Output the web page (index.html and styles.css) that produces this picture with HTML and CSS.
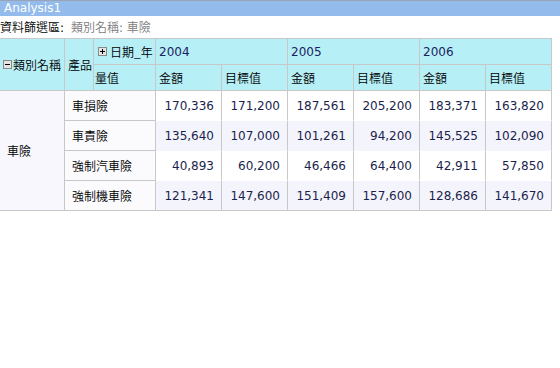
FILE: index.html
```html
<!DOCTYPE html>
<html lang="zh-Hant">
<head>
<meta charset="utf-8">
<title>Analysis1</title>
<link rel="stylesheet" href="styles.css">
</head>
<body>
<div class="titlebar">Analysis1</div>
<div class="filter"><span class="flabel"><span class="zh">資料篩選區</span>:</span> <span class="fval"><span class="zh">類別名稱</span>: <span class="zh">車險</span></span></div>
<div class="pivot">
  <div class="cell hdr cat"><svg class="tog" width="9" height="9" viewBox="0 0 9 9"><rect x="0.5" y="0.5" width="8" height="8" fill="#e4e4e4" stroke="#8a8a8a"/><path d="M2 4.5h5" stroke="#000" stroke-width="1"/></svg><span class="zh">類別名稱</span></div>
  <div class="cell hdr prod zh">產品</div>
  <div class="cell hdr date"><svg class="tog" width="9" height="9" viewBox="0 0 9 9"><rect x="0.5" y="0.5" width="8" height="8" fill="#e4e4e4" stroke="#8a8a8a"/><path d="M2 4.5h5M4.5 2v5" stroke="#000" stroke-width="1"/></svg><span class="zh">日期_年</span></div>
  <div class="cell hdr year">2004</div>
  <div class="cell hdr year">2005</div>
  <div class="cell hdr year">2006</div>
  <div class="cell hdr measure zh">量值</div>
  <div class="cell hdr metric zh">金額</div>
  <div class="cell hdr metric zh">目標值</div>
  <div class="cell hdr metric zh">金額</div>
  <div class="cell hdr metric zh">目標值</div>
  <div class="cell hdr metric zh">金額</div>
  <div class="cell hdr metric zh">目標值</div>

  <div class="cell group zh">車險</div>

  <div class="cell item zh">車損險</div>
  <div class="cell num">170,336</div><div class="cell num">171,200</div><div class="cell num">187,561</div><div class="cell num">205,200</div><div class="cell num">183,371</div><div class="cell num">163,820</div>

  <div class="cell item zh">車責險</div>
  <div class="cell num alt">135,640</div><div class="cell num alt">107,000</div><div class="cell num alt">101,261</div><div class="cell num alt">94,200</div><div class="cell num alt">145,525</div><div class="cell num alt">102,090</div>

  <div class="cell item zh">強制汽車險</div>
  <div class="cell num">40,893</div><div class="cell num">60,200</div><div class="cell num">46,466</div><div class="cell num">64,400</div><div class="cell num">42,911</div><div class="cell num">57,850</div>

  <div class="cell item zh">強制機車險</div>
  <div class="cell num alt last">121,341</div><div class="cell num alt last">147,600</div><div class="cell num alt last">151,409</div><div class="cell num alt last">157,600</div><div class="cell num alt last">128,686</div><div class="cell num alt last">141,670</div>
</div>
</body>
</html>
```

FILE: styles.css
```css
html, body {
  margin: 0;
  padding: 0;
  background: #ffffff;
}

body {
  font-family: "DejaVu Sans", "Noto Sans CJK TC", sans-serif;
  font-size: 12px;
  line-height: 14px;
  color: #000;
}

.zh {
  font-family: "Noto Sans CJK TC", "DejaVu Sans", sans-serif;
  font-weight: 350;
}

.titlebar {
  height: 15px;
  border-top: 1px solid #9aa4b4;
  background: #93bcec;
  color: #ffffff;
  padding-left: 4px;
  line-height: 15px;
  font-size: 12px;
}

.filter {
  height: 22px;
  line-height: 22px;
  white-space: nowrap;
}

.flabel {
  color: #000;
}

.fval {
  color: #7c7c7c;
  margin-left: 3px;
}

.pivot {
  display: grid;
  grid-template-columns: 65px 29px 62px repeat(6, 66px);
  grid-template-rows: 26px 26px 30px 30px 30px 30px;
  width: 552px;
  border-top: 1px solid #c8c8c8;
}

.cell {
  box-sizing: border-box;
  display: flex;
  align-items: center;
  border-right: 1px solid #c8c8c8;
  border-bottom: 1px solid #c8c8c8;
  white-space: nowrap;
  overflow: hidden;
}

.hdr {
  background: #b7eff7;
}

.cat {
  grid-row: 1 / 3;
  grid-column: 1;
  padding-left: 3px;
}

.tog {
  flex: none;
  margin-right: 1px;
}

.prod {
  grid-row: 1 / 3;
  grid-column: 2;
  padding-left: 3px;
}

.date {
  grid-row: 1;
  grid-column: 3;
  padding-left: 4px;
}

.date .tog {
  margin-right: 3px;
}

.year {
  grid-column: span 2;
  padding-left: 3px;
  color: #17235f;
}

.measure {
  grid-row: 2;
  grid-column: 3;
  padding-left: 1px;
}

.metric {
  padding-left: 3px;
}

.group {
  grid-row: 3 / 7;
  grid-column: 1;
  padding-left: 7px;
  background: #f7f7fd;
}

.item {
  grid-column: 2 / 4;
  padding-left: 7px;
  background: #fbfbfe;
}

.num {
  justify-content: flex-end;
  padding-right: 7px;
  color: #1b1f4d;
  background: #ffffff;
  border-bottom-color: transparent;
}

.num.alt {
  background: #f4f4fc;
}

.num.last {
  border-bottom-color: #c8c8c8;
}
```
